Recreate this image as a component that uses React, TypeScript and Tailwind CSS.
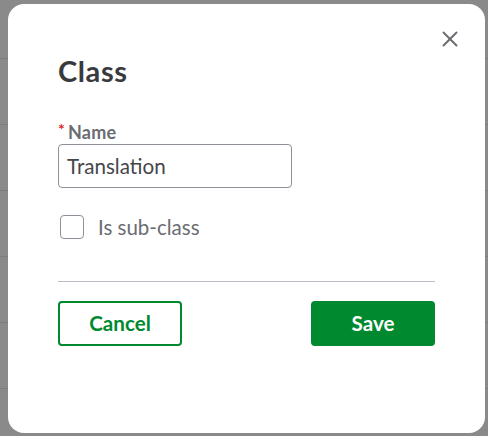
import { X } from 'lucide-react';

const rows = [0, 1, 2, 3, 4, 5];

export default function App() {
  return (
    <div className="relative w-[488px] h-[436px] overflow-hidden bg-[#8a8a8a] font-['Lato',sans-serif]">
      {/* Dimmed page behind the dialog */}
      <div className="flex flex-col">
        <div className="h-[59px] border-b border-[#7d7d7d]" />
        {rows.map(r => (
          <div key={r} className="h-[66px] border-b border-[#7d7d7d]" />
        ))}
      </div>

      {/* Dialog */}
      <div className="absolute left-[8px] top-[4px] w-[477px] h-[429px] rounded-[16px] bg-white px-[50px] pt-[50px] flex flex-col">
        <button className="absolute right-[22px] top-[22px] w-[26px] h-[26px] flex items-center justify-center text-[#6b6c72]">
          <X size={26} strokeWidth={1.8} />
        </button>

        <h2 className="text-[29px] leading-[34px] tracking-[0.6px] font-bold text-[#393a3d]">Class</h2>

        <label className="mt-[34px] flex items-start text-[18px] leading-[20px] tracking-[0.2px] font-bold text-[#6b6c72]">
          <span className="text-[#d52b1e] text-[16px] leading-[14px] mr-[3px]">*</span>
          Name
        </label>

        <input
          type="text"
          defaultValue="Translation"
          className="mt-[2px] w-[234px] h-[44px] px-[8px] border border-[#8d9096] rounded-[4px] text-[20.6px] text-[#45464a] outline-none"
        />

        <label className="mt-[24px] ml-[2px] flex items-center gap-[14px] text-[20.5px] text-[#6b6c72]">
          <span className="w-[24px] h-[24px] rounded-[4px] border border-[#8d9096] bg-white" />
          Is sub-class
        </label>

        <div className="mt-[38px] h-px bg-[#babec5]" />

        <div className="mt-[19px] flex justify-between">
          <button className="w-[124px] h-[45px] rounded-[4px] border-2 border-[#00892e] text-[#00892e] text-[20.6px] font-bold">
            Cancel
          </button>
          <button className="w-[124px] h-[45px] rounded-[4px] bg-[#00892e] text-white text-[20.6px] font-bold">
            Save
          </button>
        </div>
      </div>
    </div>
  );
}
